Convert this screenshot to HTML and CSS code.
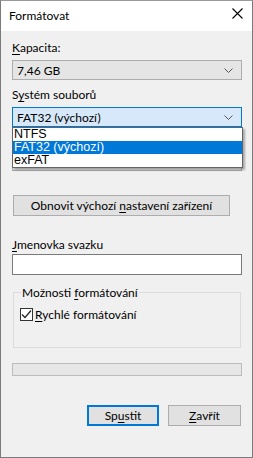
FILE: index.html
```html
<!DOCTYPE html>
<html lang="cs">
<head>
    <meta charset="UTF-8">
    <title>Formátovat</title>
    <link rel="stylesheet" href="styles.css">
</head>
<body>
    <div class="window">
        <div class="titlebar">
            <span class="title">Formátovat</span>
            <svg class="close" width="11" height="11" viewBox="0 0 11 11">
                <path d="M0.5 0.5 L10.5 10.5 M10.5 0.5 L0.5 10.5" stroke="#000" stroke-width="1.1" fill="none"/>
            </svg>
        </div>

        <div class="content">
            <div class="label"><u>K</u>apacita:</div>
            <div class="combo">
                <span>7,46 GB</span>
                <svg class="chevron" width="9" height="5" viewBox="0 0 9 5"><path d="M0.5 0.5 L4.5 4.5 L8.5 0.5" stroke="#555" fill="none"/></svg>
            </div>

            <div class="label gap-top">S<u>y</u>stém souborů</div>
            <div class="combo-wrap">
                <div class="combo open">
                    <span>FAT32 (výchozí)</span>
                    <svg class="chevron" width="9" height="5" viewBox="0 0 9 5"><path d="M0.5 0.5 L4.5 4.5 L8.5 0.5" stroke="#555" fill="none"/></svg>
                </div>
                <ul class="dropdown">
                    <li>NTFS</li>
                    <li class="selected">FAT32 (výchozí)</li>
                    <li>exFAT</li>
                </ul>
            </div>

            <!-- allocation unit row, covered by the open list -->
            <div class="label gap-top"></div>
            <div class="combo hidden-combo"></div>

            <button class="btn restore">Obnovit výchozí <u>n</u>astavení zařízení</button>

            <div class="label name-label"><u>J</u>menovka svazku</div>
            <div class="textbox"></div>

            <fieldset class="group">
                <legend>Možnosti <u>f</u>ormátování</legend>
                <div class="check-row">
                    <span class="checkbox">
                        <svg width="11" height="11" viewBox="0 0 11 11"><path d="M1 5.5 L4 8.5 L10 1.5" stroke="#222" stroke-width="1.2" fill="none"/></svg>
                    </span>
                    <span><u>R</u>ychlé formátování</span>
                </div>
            </fieldset>

            <div class="progress"></div>

            <div class="actions">
                <button class="btn default">Sp<u>u</u>stit</button>
                <button class="btn"><u>Z</u>avřít</button>
            </div>
        </div>
    </div>
</body>
</html>
```

FILE: styles.css
```css
body {
    margin: 0;
    font-family: Lato, "Noto Sans", Arial, sans-serif;
    font-size: 12px;
    color: #000;
    background: #f0f0f0;
}
u {
    text-decoration-thickness: 1px;
    text-underline-offset: 2px;
}
.window {
    width: 253px;
    height: 458px;
    box-sizing: border-box;
    border: 1px solid #7a7a7a;
    border-top-color: #9a9a9a;
    background: #f0f0f0;
    overflow: hidden;
}
.titlebar {
    height: 30px;
    background: #fff;
    display: flex;
    align-items: center;
    justify-content: space-between;
    padding: 0 9px 0 8px;
}
.title {
    font-size: 12px;
    margin-top: -1px;
}
.close {
    margin-top: -5px;
}
.content {
    padding: 9px 10px 0 11px;
}
.label {
    height: 15px;
    line-height: 15px;
    margin-bottom: 5px;
}
.gap-top {
    margin-top: 7px;
}
.combo {
    height: 20px;
    box-sizing: border-box;
    border: 1px solid #adadad;
    background: #e5e5e5;
    display: flex;
    align-items: center;
    justify-content: space-between;
    padding: 0 8px 0 4px;
}
.combo.open {
    background: #d6e8f9;
    border-color: #0078d7;
}
.combo-wrap {
    position: relative;
}
.dropdown {
    position: absolute;
    top: 100%;
    left: 0;
    width: 231px;
    box-sizing: border-box;
    margin: 0;
    padding: 0;
    list-style: none;
    background: #fff;
    border: 1px solid #646464;
    box-shadow: 2px 2px 2px rgba(0, 0, 0, 0.3);
    font-family: "Liberation Sans", Arial, sans-serif;
    font-size: 12.5px;
    z-index: 10;
}
.dropdown li {
    height: 13px;
    line-height: 13px;
    padding-left: 1px;
}
.dropdown li.selected {
    background: #0078d7;
    color: #fff;
}
.hidden-combo {
    margin-top: -3px;
}
.btn {
    font-family: inherit;
    font-size: 12px;
    color: #000;
    background: #e1e1e1;
    border: 1px solid #adadad;
    height: 21px;
    padding: 0;
    box-sizing: border-box;
}
.restore {
    display: block;
    width: 217px;
    margin: 24px 0 0 1px;
}
.name-label {
    margin-top: 21px;
    margin-bottom: 2px;
}
.textbox {
    height: 21px;
    box-sizing: border-box;
    background: #fff;
    border: 1px solid #7a7a7a;
}
.group {
    margin: 10px 1px 0 1px;
    padding: 8px 5px 26px 6px;
    border: 1px solid #dcdcdc;
    min-width: 0;
}
.group legend {
    padding: 0 1px;
    margin-left: 1px;
    line-height: 15px;
}
.check-row {
    display: flex;
    align-items: center;
    gap: 2px;
    height: 13px;
}
.checkbox {
    width: 13px;
    height: 13px;
    box-sizing: border-box;
    border: 1px solid #333;
    background: #fff;
    display: flex;
    align-items: center;
    justify-content: center;
}
.progress {
    margin-top: 15px;
    height: 13px;
    box-sizing: border-box;
    border: 1px solid #bcbcbc;
    background: #e6e6e6;
    width: 230px;
}
.actions {
    display: flex;
    justify-content: flex-end;
    gap: 9px;
    margin-top: 29px;
    padding-right: 1px;
}
.actions .btn {
    width: 73px;
}
.actions .btn.default {
    width: 72px;
    border: 2px solid #0078d7;
}
```
